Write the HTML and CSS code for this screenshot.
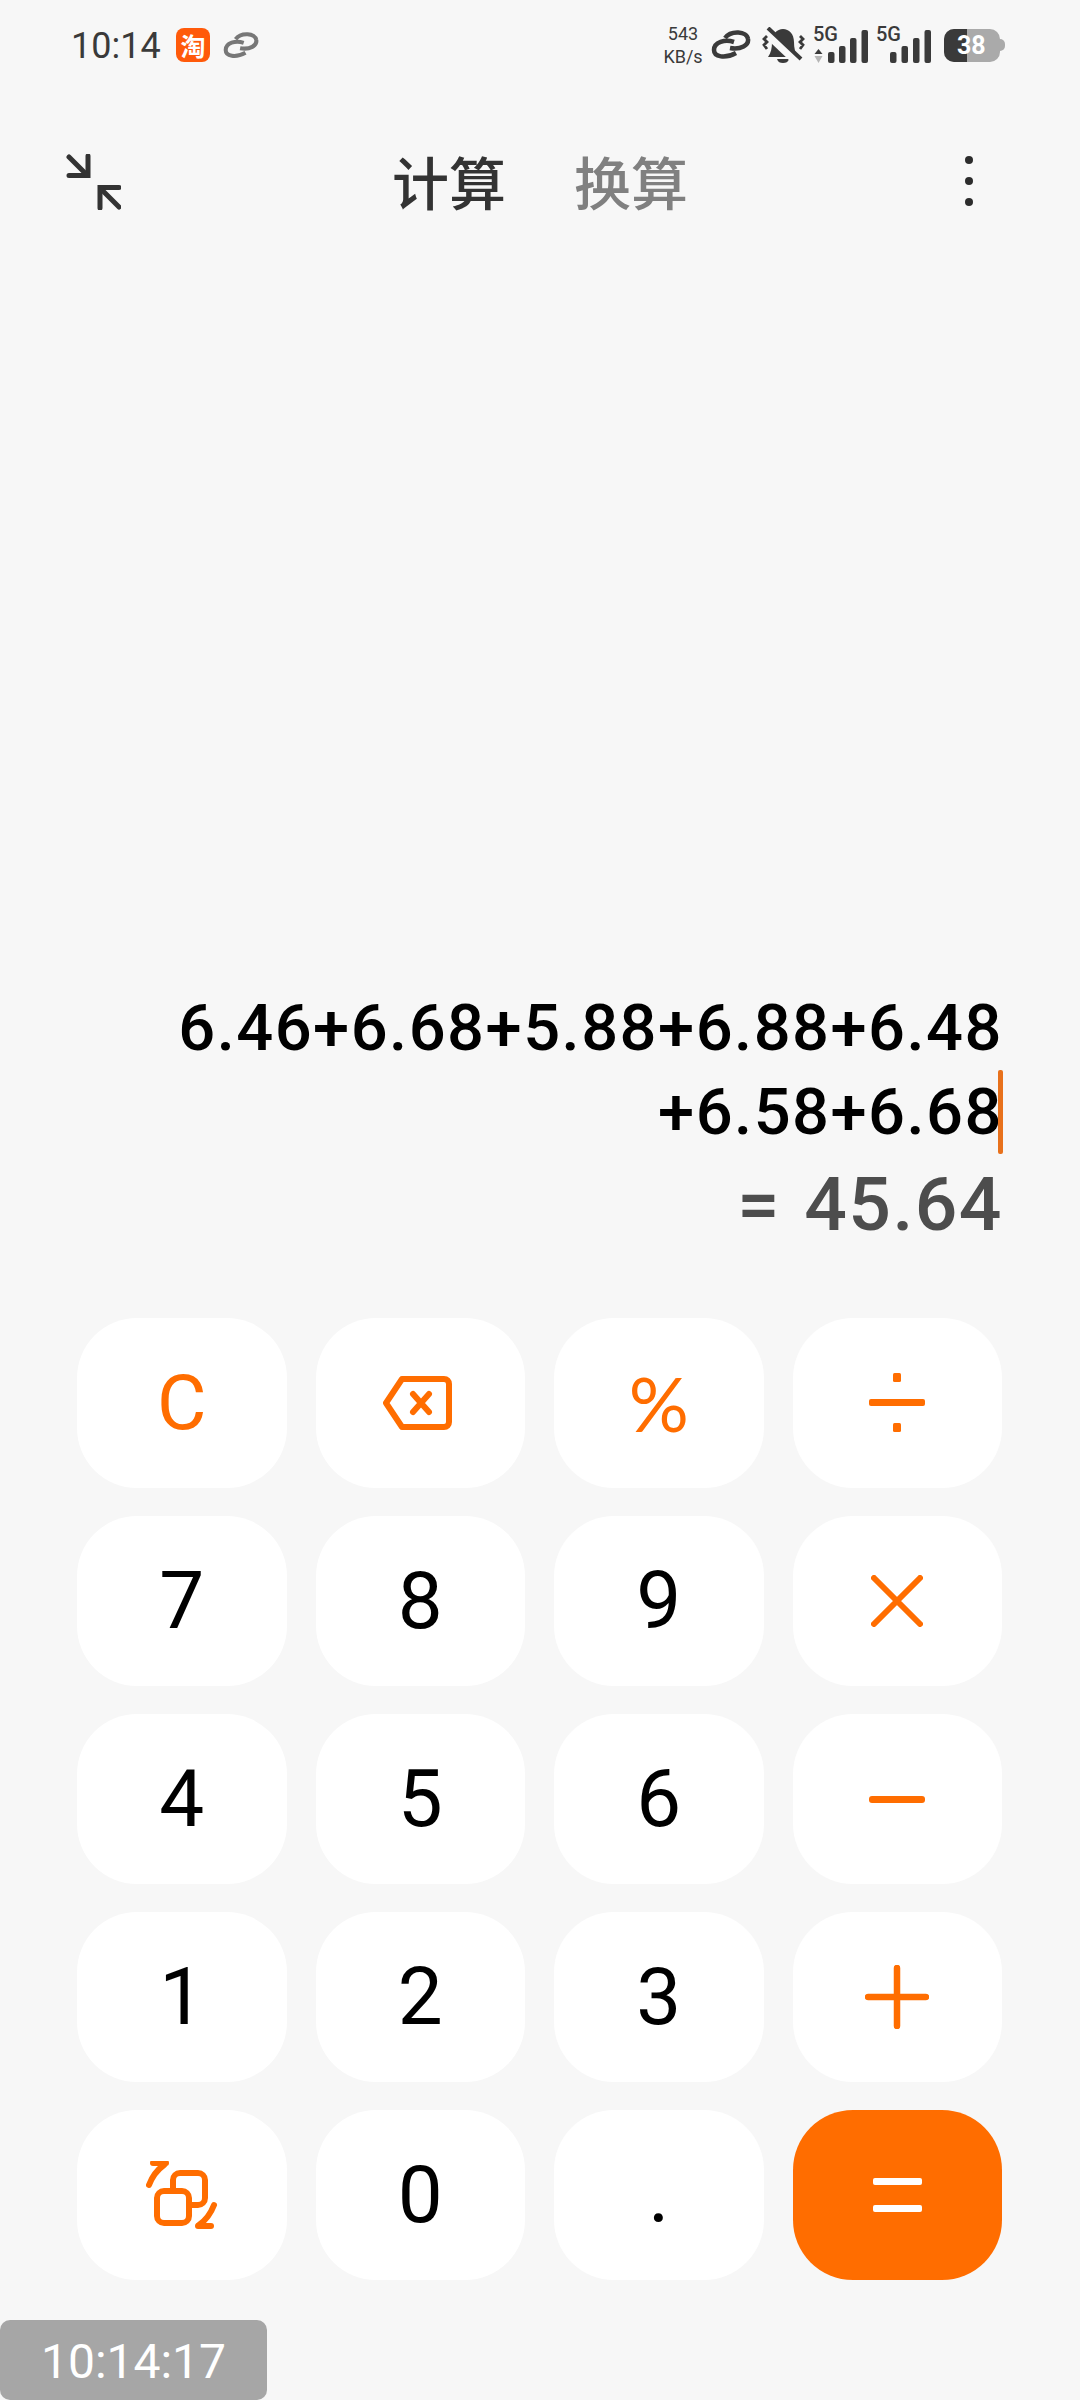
FILE: index.html
```html
<!DOCTYPE html>
<html lang="zh-CN">
<head>
    <meta charset="UTF-8">
    <meta name="viewport" content="width=device-width, initial-scale=1.0">
    <title>计算器</title>
    <link rel="stylesheet" href="styles.css">
</head>
<body>
    <div class="screen">
        <div class="status-bar">
            <div class="status-left">
                <span class="clock">10:14</span>
                <span class="app-badge">淘</span>
                <svg class="link-small" viewBox="0 0 40 30" fill="none" stroke="#777" stroke-width="4.500">
                    <path d="M23 12C14 9 3 12 3 20C3 27 14 29 25 23"/>
                    <path d="M14 8C20 0 36 1 37 9C38 15 30 20 19 18"/>
                </svg>
            </div>
            <div class="status-right">
                <div class="net-speed"><span>543</span><span>KB/s</span></div>
                <svg class="chain" viewBox="0 0 40 30" fill="none" stroke="#3a3a3a" stroke-width="4.500">
                    <path d="M23 12C14 9 3 12 3 20C3 27 14 29 25 23"/>
                    <path d="M14 8C20 0 36 1 37 9C38 15 30 20 19 18"/>
                </svg>
                <svg class="bell" viewBox="0 0 43 37" fill="#3a3a3a">
                    <path d="M6 30C9 26 10 21 10 15C10 7 15 2 21 2C27 2 32 7 32 15C32 21 33 26 36 30Z"/>
                    <path d="M15 32H27C26 35 24 36 21 36C18 36 16 35 15 32Z"/>
                    <path d="M1 3L36 36" stroke="#f7f7f7" stroke-width="8"/>
                    <path d="M6 1L39 32" stroke="#3a3a3a" stroke-width="4"/>
                    <path d="M5 9L2 12L5 15L2 18L5 22M38 9L41 12L38 15L41 18L38 22" fill="none" stroke="#3a3a3a" stroke-width="2.800"/>
                </svg>
                <svg class="signal-wide" viewBox="0 -8 55 52" fill="#3a3a3a">
                    <text class="signal-label" x="0" y="14">5G</text>
                    <path d="M5.500 22L9.500 27H1.500Z"/>
                    <path d="M5.500 36L9.500 29H1.500Z" fill="#b5b5b5"/>
                    <rect x="15" y="25" width="6.500" height="11" rx="2"/>
                    <rect x="26" y="19" width="6.500" height="17" rx="2"/>
                    <rect x="37" y="11" width="6.500" height="25" rx="2"/>
                    <rect x="48.500" y="3" width="6.500" height="33" rx="2"/>
                </svg>
                <svg class="signal-wide" viewBox="0 -8 55 52" fill="#3a3a3a">
                    <text class="signal-label" x="0" y="14">5G</text>
                    <rect x="14" y="25" width="6.500" height="11" rx="2"/>
                    <rect x="25.500" y="19" width="6.500" height="17" rx="2"/>
                    <rect x="37" y="11" width="6.500" height="25" rx="2"/>
                    <rect x="48.500" y="3" width="6.500" height="33" rx="2"/>
                </svg>
                <div class="battery">
                    <div class="battery-body">
                        <div class="battery-fill"></div>
                        <span class="battery-level">38</span>
                    </div>
                    <div class="battery-tip"></div>
                </div>
            </div>
        </div>

        <div class="header">
            <svg class="compress" viewBox="0 0 55 56" fill="none" stroke="#333" stroke-width="5" stroke-linecap="round">
                <path d="M3 21.500H22V2"/>
                <path d="M3 3L21 21"/>
                <path d="M34 54V33.500H53"/>
                <path d="M35 35L53 53"/>
            </svg>
            <div class="tabs">
                <span class="tab active">计算</span>
                <span class="tab">换算</span>
            </div>
            <div class="more">
                <span class="dot"></span>
                <span class="dot"></span>
                <span class="dot"></span>
            </div>
        </div>

        <div class="spacer"></div>

        <div class="display">
            <div class="expr">6.46+6.68+5.88+6.88+6.48</div>
            <div class="expr current">+6.58+6.68<span class="caret"></span></div>
            <div class="result">= 45.64</div>
        </div>

        <div class="keypad">
            <button class="key op op-text">C</button>
            <button class="key" aria-label="退格">
                <svg class="icon back-icon" width="69" height="54" viewBox="0 0 69 54" fill="none" stroke="#ff6d00" stroke-width="6" stroke-linejoin="round" stroke-linecap="round">
                    <path d="M19 3H61C64 3 66 5 66 8V46C66 49 64 51 61 51H19L3 27Z"/>
                    <path d="M30 18L46 36M46 18L30 36"/>
                </svg>
            </button>
            <button class="key op op-percent">%</button>
            <button class="key" aria-label="除">
                <svg class="icon" width="56" height="60" viewBox="0 0 56 60" fill="#ff6d00">
                    <rect x="24" y="0" width="8" height="9" rx="1.500"/>
                    <rect x="0" y="26" width="56" height="7" rx="2"/>
                    <rect x="24" y="50" width="8" height="9" rx="1.500"/>
                </svg>
            </button>

            <button class="key">7</button>
            <button class="key">8</button>
            <button class="key">9</button>
            <button class="key" aria-label="乘">
                <svg class="icon" width="52" height="52" viewBox="0 0 52 52" fill="none" stroke="#ff6d00" stroke-width="6" stroke-linecap="round">
                    <path d="M3 3L49 49M49 3L3 49"/>
                </svg>
            </button>

            <button class="key">4</button>
            <button class="key">5</button>
            <button class="key">6</button>
            <button class="key" aria-label="减">
                <svg class="icon" width="56" height="7" viewBox="0 0 56 7" fill="#ff6d00">
                    <rect width="56" height="7" rx="3"/>
                </svg>
            </button>

            <button class="key">1</button>
            <button class="key">2</button>
            <button class="key">3</button>
            <button class="key" aria-label="加">
                <svg class="icon" width="64" height="64" viewBox="0 0 64 64" fill="none" stroke="#ff6d00" stroke-width="6.500" stroke-linecap="round">
                    <path d="M3 32H61M32 3V61"/>
                </svg>
            </button>

            <button class="key" aria-label="切换">
                <svg class="icon" width="72" height="68" viewBox="0 0 72 68" fill="none" stroke="#ff6d00" stroke-width="6" stroke-linecap="round" stroke-linejoin="round">
                    <rect x="27" y="12" width="32" height="32" rx="7"/>
                    <rect x="11" y="30" width="32" height="32" rx="7" fill="#fff"/>
                    <path d="M3 24C6 16 11 9 18 4"/>
                    <path d="M7 2H20"/>
                    <path d="M68 44C65 52 60 59 53 64"/>
                    <path d="M52 65H65"/>
                </svg>
            </button>
            <button class="key">0</button>
            <button class="key">.</button>
            <button class="key equals" aria-label="等于">
                <svg class="icon" width="49" height="34" viewBox="0 0 49 34" fill="#fff">
                    <rect width="49" height="7" rx="2"/>
                    <rect y="27" width="49" height="7" rx="2"/>
                </svg>
            </button>
        </div>

        <div class="footer">
            <div class="timestamp">10:14:17</div>
        </div>
    </div>
</body>
</html>
```

FILE: styles.css
```css
* {
    box-sizing: border-box;
}
body {
    margin: 0;
    background-color: #f7f7f7;
    font-family: Roboto, "Noto Sans CJK SC", sans-serif;
}
.screen {
    width: 1080px;
    height: 2400px;
    display: flex;
    flex-direction: column;
    overflow: hidden;
}

/* status bar */
.status-bar {
    height: 90px;
    padding: 0 75px 0 71px;
    display: flex;
    align-items: center;
    justify-content: space-between;
    color: #3a3a3a;
}
.status-left {
    display: flex;
    align-items: center;
}
.clock {
    font-size: 36px;
    line-height: 48px;
    padding-top: 2px;
    width: 105px;
}
.app-badge {
    width: 34px;
    height: 34px;
    border-radius: 8px;
    background-color: #ff5a0a;
    color: #fff;
    font-family: "Noto Sans CJK SC", sans-serif;
    font-size: 25px;
    font-weight: 700;
    line-height: 34px;
    text-align: center;
}
.link-small {
    width: 36px;
    height: 27px;
    margin-left: 13px;
}
.status-right {
    display: flex;
    align-items: center;
    gap: 8px;
}
.net-speed {
    width: 38px;
    display: flex;
    flex-direction: column;
    align-items: center;
    font-size: 18px;
    line-height: 23px;
}
.chain {
    width: 40px;
    height: 30px;
    margin-left: 1px;
    margin-right: 3px;
}
.bell {
    width: 43px;
    height: 37px;
}
.signal-wide {
    width: 55px;
    height: 52px;
}
.signal-label {
    font-size: 20px;
    font-weight: 500;
}
.battery {
    margin-left: 5px;
    display: flex;
    align-items: center;
}
.battery-body {
    position: relative;
    width: 56px;
    height: 33px;
    border-radius: 10px;
    background-color: #aaa;
    overflow: hidden;
}
.battery-fill {
    width: 23px;
    height: 100%;
    background-color: #3a3a3a;
}
.battery-level {
    position: absolute;
    top: 0;
    left: 13px;
    color: #fff;
    font-size: 25px;
    font-weight: 700;
    line-height: 33px;
}
.battery-tip {
    width: 5px;
    height: 12px;
    border-radius: 0 5px 5px 0;
    background-color: #aaa;
}

/* header */
.header {
    height: 184px;
    padding: 0 107px 0 66px;
    display: flex;
    align-items: center;
}
.compress {
    width: 55px;
    height: 56px;
    flex-shrink: 0;
}
.tabs {
    margin-left: 271px;
    margin-bottom: 5px;
    display: flex;
    gap: 68px;
}
.tab {
    font-family: "Noto Sans CJK SC", sans-serif;
    font-size: 57px;
    font-weight: 500;
    color: #808080;
}
.tab.active {
    color: #333;
}
.more {
    margin-left: auto;
    margin-bottom: 2px;
    display: flex;
    flex-direction: column;
    gap: 13px;
}
.dot {
    width: 8px;
    height: 8px;
    border-radius: 50%;
    background-color: #2c2c2c;
}

.spacer {
    flex: 1;
}

/* display */
.display {
    padding-right: 77px;
    text-align: right;
}
.expr {
    position: relative;
    font-size: 65px;
    font-weight: 500;
    line-height: 84px;
    color: #000;
    letter-spacing: 1.500px;
}
.caret {
    position: absolute;
    top: 0;
    right: 0;
    width: 5px;
    height: 84px;
    border-radius: 2px;
    background-color: #e8711c;
}
.result {
    margin-top: 8px;
    margin-bottom: 72px;
    font-size: 75px;
    font-weight: 500;
    line-height: 84px;
    color: #4d4d4d;
    letter-spacing: 1.500px;
    word-spacing: 3px;
}

/* keypad */
.keypad {
    padding: 0 78px 0 77px;
    display: grid;
    grid-template-columns: repeat(4, 1fr);
    grid-auto-rows: 170px;
    gap: 28px 29px;
}
.key {
    border: none;
    border-radius: 60px;
    background-color: #fff;
    padding: 0;
    display: flex;
    align-items: center;
    justify-content: center;
    font-family: Roboto, sans-serif;
    font-size: 80px;
    font-weight: 400;
    color: #000;
}
.key.op {
    color: #ff6d00;
}
.key.op-text {
    font-size: 76px;
}
.key.op-percent {
    font-family: Lato, sans-serif;
    font-size: 75px;
}
.key.equals {
    background-color: #ff6d00;
}
.icon {
    display: block;
}
.back-icon {
    margin-right: 6px;
}

/* timestamp overlay */
.footer {
    margin-top: 40px;
    height: 80px;
}
.timestamp {
    width: 267px;
    height: 80px;
    border-radius: 10px;
    background-color: #a6a6a6;
    color: #fff;
    font-size: 48px;
    font-weight: 400;
    line-height: 84px;
    text-align: center;
}
```
